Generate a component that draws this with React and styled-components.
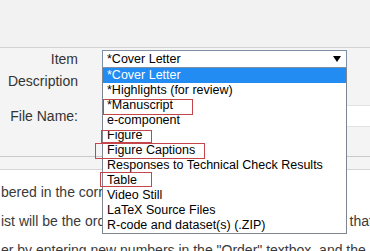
import styled, { createGlobalStyle } from "styled-components"

const GlobalStyle = createGlobalStyle`
    body {
        margin: 0;
        background: #ffffff;
        font-family: "Liberation Sans", Arial, sans-serif;
        overflow: hidden;
    }
`

const Page = styled.div`
    width: 370px;
    height: 251px;
    overflow: hidden;
    display: flex;
    flex-direction: column;
`

const TopBar = styled.div`
    height: 47px;
    flex-shrink: 0;
    background: #f2f2f2;
    border-bottom: 1px solid #d2d2d2;
`

const Form = styled.div`
    background: #f4f4f4;
    padding: 2px 0 29px;
    border-bottom: 1px solid #c9c9c9;
    display: flex;
    flex-direction: column;
`

const Row = styled.div`
    display: grid;
    grid-template-columns: 78px 1fr;
    column-gap: 24px;
    align-items: center;
    height: ${(p) => p.$h}px;
    margin-top: ${(p) => p.$top || 0}px;
`

const Label = styled.div`
    text-align: right;
    font-size: 14px;
    color: #333333;
    white-space: nowrap;
`

const SelectWrap = styled.div`
    position: relative;
    width: 245px;
    height: 18px;
`

const SelectBox = styled.div`
    box-sizing: border-box;
    height: 18px;
    background: #ffffff;
    border: 1px solid #7f8fa6;
    padding-left: 4px;
    display: flex;
    align-items: center;
    justify-content: space-between;
    font-size: 12.5px;
    color: #000000;
`

const Arrow = styled.svg`
    margin-right: 5px;
`

const List = styled.ul`
    position: absolute;
    top: 18px;
    left: 0;
    z-index: 5;
    box-sizing: border-box;
    width: 245px;
    margin: 0;
    padding: 0;
    list-style: none;
    background: #ffffff;
    border: 1px solid #7f8590;
    border-top: none;
`

const Option = styled.li`
    position: relative;
    height: 15px;
    line-height: 15px;
    padding-left: 4px;
    font-size: 12.5px;
    white-space: nowrap;
    color: ${(p) => (p.$active ? "#ffffff" : "#000000")};
    background: ${(p) => (p.$active ? "#228cf2" : "transparent")};

    &::after {
        content: "";
        display: ${(p) => (p.$mark ? "block" : "none")};
        position: absolute;
        left: ${(p) => (p.$mark ? p.$mark[0] : 0)}px;
        top: ${(p) => (p.$mark ? p.$mark[1] : 0)}px;
        width: ${(p) => (p.$mark ? p.$mark[2] : 0)}px;
        height: ${(p) => (p.$mark ? p.$mark[3] : 0)}px;
        border: 1px solid #c4464b;
        box-sizing: border-box;
    }
`

const TextInput = styled.div`
    box-sizing: border-box;
    height: 22px;
    width: 300px;
    background: #ffffff;
    border: 1px solid #e2e2e2;
`

const Band = styled.div`
    height: 12px;
    flex-shrink: 0;
    background: #f4f4f4;
    border-bottom: 1px solid #d6d6d6;
`

const Body = styled.div`
    padding-top: 8px;
    font-size: 14px;
    line-height: 29px;
    color: #3a3a3a;
    white-space: nowrap;
`

const Line = styled.div`
    padding-left: 1px;
`

const options = [
    { text: "*Cover Letter", active: true },
    { text: "*Highlights (for review)" },
    { text: "*Manuscript", mark: [0, 1, 90, 16] },
    { text: "e-component" },
    { text: "Figure", mark: [-2, 2, 51, 13] },
    { text: "Figure Captions", mark: [-8, 0, 110, 16] },
    { text: "Responses to Technical Check Results" },
    { text: "Table", mark: [-3, -1, 52, 15] },
    { text: "Video Still" },
    { text: "LaTeX Source Files" },
    { text: "R-code and dataset(s) (.ZIP)" },
]

function App()
{
    return(
        <Page>
            <GlobalStyle/>
            <TopBar/>
            <Form>
                <Row $h={18}>
                    <Label>Item</Label>
                    <SelectWrap>
                        <SelectBox>
                            *Cover Letter
                            <Arrow width="8" height="6" viewBox="0 0 8 6">
                                <polygon points="0,0 8,0 4,6" fill="#000"/>
                            </Arrow>
                        </SelectBox>
                        <List>
                            {options.map((o) => (
                                <Option key={o.text} $active={o.active} $mark={o.mark}>{o.text}</Option>
                            ))}
                        </List>
                    </SelectWrap>
                </Row>
                <Row $h={22} $top={2}>
                    <Label>Description</Label>
                </Row>
                <Row $h={22} $top={13}>
                    <Label>File Name:</Label>
                    <TextInput/>
                </Row>
            </Form>
            <Band/>
            <Body>
                <Line>bered in the correct order.</Line>
                <Line>ist will be the order in which they will appear, make sure that</Line>
                <Line>er by entering new numbers in the "Order" textbox, and the</Line>
            </Body>
        </Page>
    )
}

export default App
